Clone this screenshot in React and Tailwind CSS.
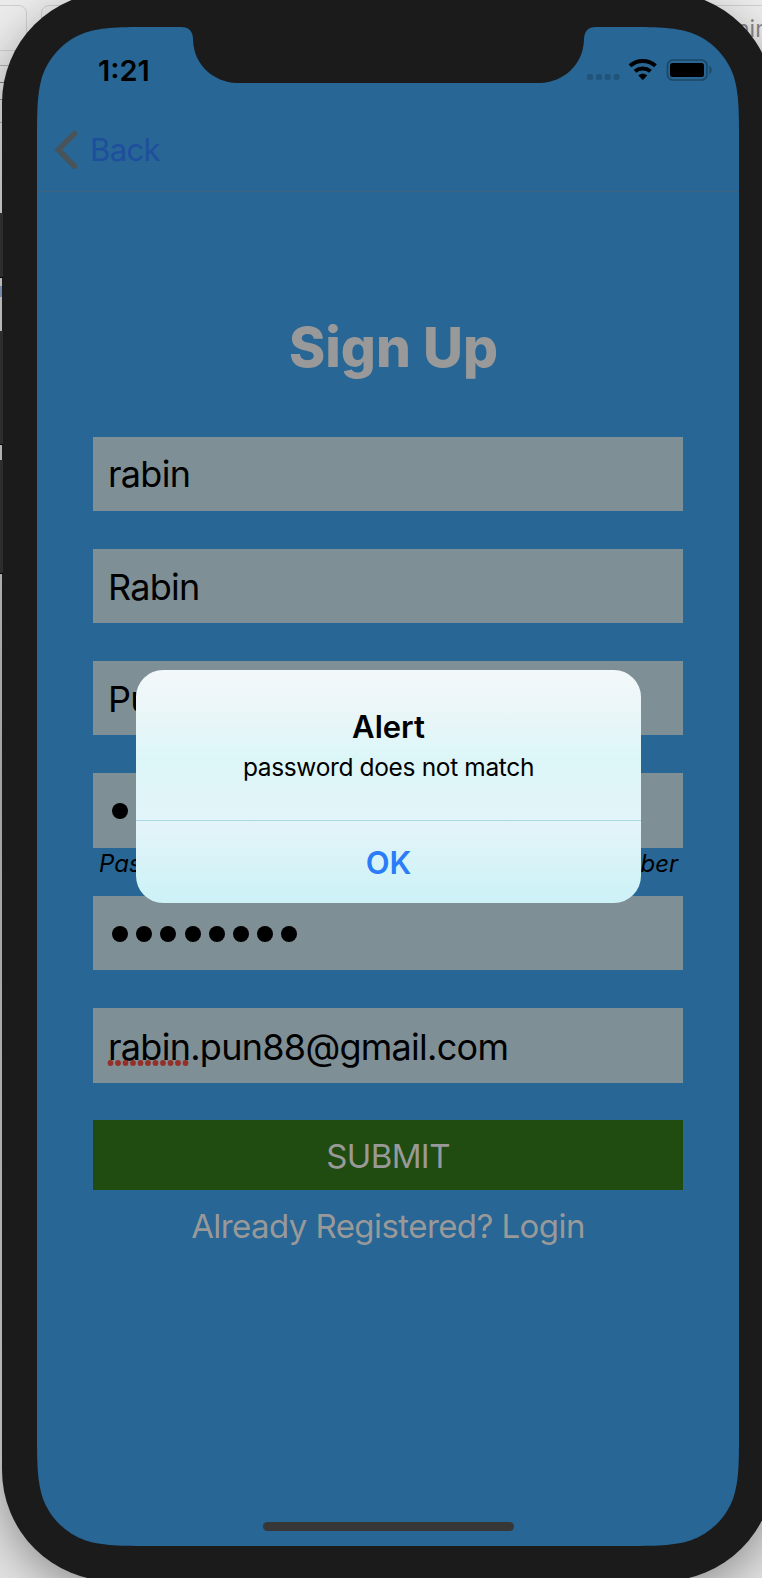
import React from "react";

function Field({ children, className = "" }) {
  return (
    <div className={"flex h-[74.5px] w-[590px] items-center bg-[#7f8f96] pl-[15px] pt-[1px] text-[36px] leading-none tracking-[-0.72px] text-black " + className}>
      {children}
    </div>
  );
}

function Dots({ count }) {
  return (
    <div className="flex gap-[8.2px] pl-[4px]">
      {Array.from({ length: count }, (_, i) => (
        <span key={i} className="size-[16px] rounded-full bg-black" />
      ))}
    </div>
  );
}

function Desktop() {
  return (
    <div className="absolute inset-0 bg-linear-to-b from-[#ececec] via-[#c4c4c4] to-[#e2e2e2]">
      <div className="absolute -left-5 top-[5px] h-[46px] w-[47px] rounded-lg border border-[#cfcfcf]" />
      <div className="absolute left-[41px] top-[5px] h-[46px] w-[900px] rounded-lg border border-[#cfcfcf]" />
      <div className="absolute left-0 top-[65px] h-px w-10 bg-[#b0b0b0]" />
      <div className="absolute left-0 top-[82px] h-px w-10 bg-[#808080]" />
      <div className="absolute left-0 top-[99px] h-px w-10 bg-[#909090]" />
      <div className="absolute left-0 top-[122px] h-px w-10 bg-[#b0b0b0]" />
      <div className="absolute left-0 top-[286px] h-[11px] w-[2px] bg-[#8fa3cc]" />
      <span className="absolute left-[736px] top-[15px] text-[23px] leading-7 text-[#858585]">nin</span>
    </div>
  );
}

function SideButtons() {
  return (
    <>
      <div className="absolute left-0 top-[213px] h-[65px] w-[3px] border-b border-black bg-[#2d2d2d]" />
      <div className="absolute left-0 top-[331px] h-[114px] w-[3px] border-b border-black bg-[#2d2d2d]" />
      <div className="absolute left-0 top-[460px] h-[114px] w-[3px] border-b border-black bg-[#2d2d2d]" />
    </>
  );
}

export default function App() {
  return (
    <div className="relative h-[1578px] w-[762px] overflow-hidden font-['Inter','Liberation_Sans',sans-serif]">
      <Desktop />
      <div className="relative -mt-[8px] ml-[2px] h-[1589px] w-[772px] rounded-[111px] bg-[#1b1b1b] p-[35px] shadow-[0_14px_45px_rgba(0,0,0,0.35)]">
        <div className="relative flex h-[1519px] w-[702px] flex-col bg-[#276695] [clip-path:path('M116.2_0C82.7_0_66_0_48_5.7C28.3_12.8_12.8_28.3_5.7_48C0_66_0_82.7_0_116.2V1402.8C0_1436.3_0_1453_5.7_1471C12.8_1490.7_28.3_1506.2_48_1513.3C66_1519_82.7_1519_116.2_1519H585.8C619.3_1519_636_1519_654_1513.3C673.7_1506.2_689.2_1490.7_696.3_1471C702_1453_702_1436.3_702_1402.8V116.2C702_82.7_702_66_696.3_48C689.2_28.3_673.7_12.8_654_5.7C636_0_619.3_0_585.8_0Z')]">
          <svg className="absolute left-0 top-0" width="702" height="60" fill="#1b1b1b">
            <path d="M144 0C152 0 156 4 156 13C157 38 176 55 200 56H503C527 55 546 38 547 13C547 4 551 0 559 0Z" />
          </svg>
          <header className="h-[165px] shrink-0 border-b border-[#41647d]">
            <div className="flex h-[86px] items-center justify-between pl-[61px] pr-[27px]">
              <span className="text-[29px] font-semibold leading-none">1:21</span>
              <svg width="126" height="24" viewBox="0 0 126 24">
                <g fill="#20547b">
                  <rect x="1" y="16" width="6" height="6" rx="2" />
                  <rect x="10" y="16" width="6" height="6" rx="2" />
                  <rect x="18.7" y="16" width="6" height="6" rx="2" />
                  <rect x="27.5" y="16" width="6" height="6" rx="2" />
                </g>
                <path d="M123.5 7.5C126.3 9.5 126.3 14.5 123.5 16.5Z" fill="#1c4866" />
                <g fill="none" stroke="#000" strokeWidth="4">
                  <path d="M44 7.8C51.500 1.300 62 1.300 69.500 7.800" />
                  <path d="M49 13.300C53.500 9.700 60 9.700 64.500 13.300" />
                </g>
                <path d="M52.200 17.300C55 15.200 58.500 15.200 61.300 17.300L57.700 21.200Q56.800 22.200 55.900 21.200Z" />
                <rect x="81.5" y="2" width="39.5" height="20" rx="5.5" fill="none" stroke="#1c4866" strokeWidth="1.7" />
                <rect x="84" y="5" width="34" height="14" rx="2.5" />
              </svg>
            </div>
            <div className="flex h-[74px] items-center pl-[17px]">
              <svg width="24" height="40" viewBox="0 0 24 40" fill="none" stroke="#485459" strokeWidth="5.5" strokeLinecap="round">
                <path d="M20.5 3.5L4.3 19.8L20.5 36.2" />
              </svg>
              <span className="mb-[2px] ml-[12px] text-[31px] leading-none tracking-[-0.6px] text-[#1e4f9d]">Back</span>
            </div>
          </header>
          <main className="flex flex-col items-center">
            <h1 className="mt-[125px] pl-[11px] text-[55px] font-extrabold leading-[60px] text-[#999]">Sign Up</h1>
            <Field className="mt-[59.5px]"><span>rabin</span></Field>
            <Field className="mt-[37.8px]"><span>Rabin</span></Field>
            <Field className="mt-[37.7px]"><span>Pun</span></Field>
            <Field className="mt-[37.7px]"><Dots count={8} /></Field>
            <p className="flex h-[48.3px] w-[578px] justify-between pt-[2px] text-[24px] italic leading-7 text-black">
              <span>Password</span>
              <span className="-mr-[1px]">number</span>
            </p>
            <Field><Dots count={8} /></Field>
            <Field className="mt-[37.8px]">
              <span className="relative mt-[1px]">
                rabin.pun88@gmail.com
                <svg className="absolute -left-[1px] top-[31px]" width="84" height="6" fill="#953029">
                  {Array.from({ length: 11 }, (_, i) => <circle key={i} cx={3.5 + i * 7.5} cy="3" r="2.900" />)}
                </svg>
              </span>
            </Field>
            <button className="mt-[37.7px] h-[70px] w-[590px] bg-[#204c11] pt-[2px] text-[33px] leading-none tracking-[-0.6px] text-[#999]">SUBMIT</button>
            <p className="mt-[15px] text-[33px] leading-[42px] tracking-[-0.57px] text-[#999]">Already Registered? Login</p>
          </main>
          <div className="mb-[15px] mt-auto h-[9px] w-[251px] self-center rounded-full bg-[#373737]" />
          <section className="absolute left-[99px] top-[643px] flex h-[233px] w-[505px] flex-col items-center rounded-[27px] bg-[linear-gradient(to_bottom,#f3f8fa_0%,#e9f6f8_20%,#dcf6f8_38%,#e1f5f9_55%,#e2f4f9_68%,#d3f3f7_88%,#cdf2f7_100%)] text-black">
            <h2 className="mt-[40px] text-[31px] font-semibold leading-[34px]">Alert</h2>
            <p className="mt-[8px] text-[24.5px] leading-[30px] tracking-[-0.35px]">password does not match</p>
            <button className="mt-auto h-[83px] w-full border-t border-[#a9d9e6] text-[31px] font-semibold leading-none text-[#2b7cf8]">OK</button>
          </section>
        </div>
      </div>
      <SideButtons />
    </div>
  );
}
